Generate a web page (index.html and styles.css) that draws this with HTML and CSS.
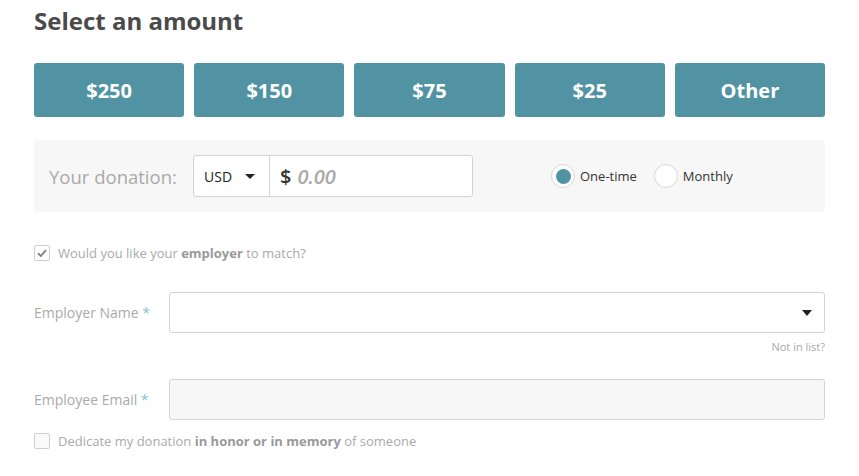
FILE: index.html
```html
<!DOCTYPE html>
<html>
<head>
<meta charset="utf-8">
<link rel="stylesheet" href="styles.css">
</head>
<body>
<div class="page">
  <h1 class="title">Select an amount</h1>
  <div class="amounts">
    <button class="amount">$250</button>
    <button class="amount">$150</button>
    <button class="amount">$75</button>
    <button class="amount">$25</button>
    <button class="amount">Other</button>
  </div>
  <div class="donation">
    <span class="donation-label">Your donation:</span>
    <div class="input-group">
      <div class="currency">USD <span class="caret"></span></div>
      <div class="value"><span class="dollar">$</span><span class="placeholder">0.00</span></div>
    </div>
    <div class="freq">
      <label class="radio"><span class="radio-circle checked"><span class="dot"></span></span>One-time</label>
      <label class="radio"><span class="radio-circle"></span>Monthly</label>
    </div>
  </div>
  <div class="check-row match">
    <span class="checkbox checked"><svg width="10" height="8" viewBox="0 0 10 8"><path d="M1 4.2 L3.8 7 L9 1.2" fill="none" stroke="#888" stroke-width="2"/></svg></span>
    <span class="check-label">Would you like your <b>employer</b> to match?</span>
  </div>
  <div class="field employer">
    <span class="field-label">Employer Name <span class="req">*</span></span>
    <div class="field-input select"><span class="caret dark"></span></div>
  </div>
  <div class="not-in-list">Not in list?</div>
  <div class="field email">
    <span class="field-label">Employee Email <span class="req">*</span></span>
    <div class="field-input disabled"></div>
  </div>
  <div class="check-row dedicate">
    <span class="checkbox"></span>
    <span class="check-label">Dedicate my donation <b>in honor or in memory</b> of someone</span>
  </div>
</div>
</body>
</html>
```

FILE: styles.css
```css
* { box-sizing: border-box; }
body {
  margin: 0;
  background: #fff;
  font-family: "Open Sans", "Liberation Sans", sans-serif;
}
.page {
  width: 791px;
  margin-left: 34px;
  padding-top: 4px;
}
.title {
  margin: 0;
  font-size: 24px;
  line-height: 34px;
  font-weight: 700;
  color: #4a4a4a;
}
.amounts {
  display: flex;
  gap: 10px;
  margin-top: 25px;
}
.amount {
  flex: 1;
  height: 54px;
  border: none;
  border-radius: 3px;
  background: #5193a3;
  color: #fff;
  font-family: inherit;
  font-weight: 700;
  font-size: 20px;
  padding: 0;
}
.donation {
  margin-top: 23px;
  height: 72px;
  background: #f7f7f7;
  border-radius: 4px;
  display: flex;
  align-items: center;
  padding-left: 15px;
}
.donation-label {
  font-size: 18.5px;
  color: #aaa;
  width: 144px;
}
.input-group {
  display: flex;
  width: 280px;
  height: 42px;
  background: #fff;
  border: 1px solid #d3d3d3;
  border-radius: 3px;
}
.currency {
  width: 76px;
  border-right: 1px solid #d3d3d3;
  display: flex;
  align-items: center;
  padding-left: 10px;
  font-size: 14px;
  color: #222;
}
.currency .caret { margin-left: 13px; }
.caret {
  display: inline-block;
  width: 0;
  height: 0;
  border-left: 5px solid transparent;
  border-right: 5px solid transparent;
  border-top: 5px solid #222;
}
.value {
  display: flex;
  align-items: center;
  padding-left: 10px;
  font-size: 20px;
}
.dollar { color: #333; margin-right: 6px; font-weight: 600; }
.placeholder { color: #aaa; font-style: italic; font-weight: 600; }
.freq {
  display: flex;
  gap: 17px;
  margin-left: 78px;
}
.radio {
  display: flex;
  align-items: center;
  font-size: 13px;
  color: #333;
}
.radio-circle {
  width: 24px;
  height: 24px;
  border-radius: 50%;
  border: 1px solid #d6d6d6;
  background: #fff;
  display: flex;
  align-items: center;
  justify-content: center;
  margin-right: 5px;
}
.dot {
  width: 15px;
  height: 15px;
  border-radius: 50%;
  background: #5193a3;
}
.check-row {
  display: flex;
  align-items: center;
  font-size: 13px;
  color: #aaa;
}
.check-row b { color: #999; font-weight: 700; }
.match { margin-top: 32px; }
.checkbox {
  width: 16px;
  height: 16px;
  border: 1px solid #cfcfcf;
  border-radius: 2px;
  background: #fafafa;
  margin-right: 8px;
  display: flex;
  align-items: center;
  justify-content: center;
}
.checkbox.checked { background: #fff; }
.field {
  display: flex;
  align-items: center;
}
.employer { margin-top: 30px; }
.field-label {
  width: 135px;
  font-size: 14px;
  color: #aaa;
}
.req { color: #8cbfcc; }
.field-input {
  flex: 1;
  height: 41px;
  border: 1px solid #d3d3d3;
  border-radius: 3px;
  background: #fff;
}
.field-input.select {
  display: flex;
  align-items: center;
  justify-content: flex-end;
  padding-right: 12px;
}
.caret.dark { border-top-width: 6px; border-left-width: 5px; border-right-width: 5px; }
.field-input.disabled { background: #f7f7f7; }
.not-in-list {
  text-align: right;
  font-size: 11px;
  line-height: 14px;
  color: #aaa;
  margin-top: 7px;
}
.email { margin-top: 25px; }
.dedicate { margin-top: 12px; }
```
